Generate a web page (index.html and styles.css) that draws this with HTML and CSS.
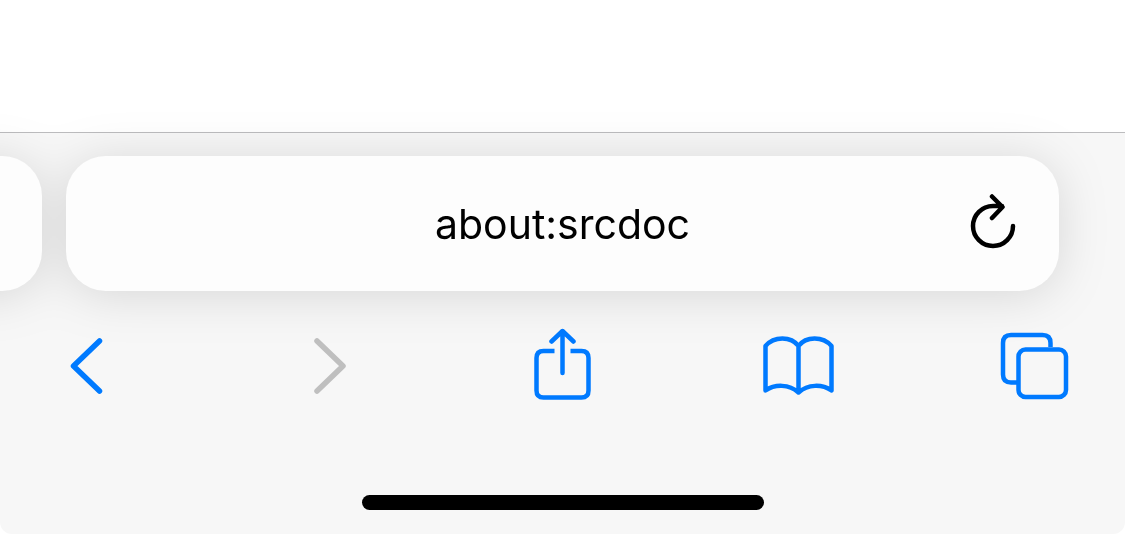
FILE: index.html
```html
<!DOCTYPE html>
<html lang="en">
<head>
	<meta charset="utf-8">
	<meta name="viewport" content="width=device-width, initial-scale=1">
	<title>about:srcdoc</title>
	<link rel="stylesheet" href="styles.css">
</head>
<body>
	<main class="page"></main>

	<footer class="browser-bar">
		<div class="tabs">
			<div class="tab previous-tab"></div>
			<form class="tab address-bar">
				<input class="address" type="text" value="about:srcdoc" aria-label="Address" readonly>
				<button class="reload" type="button" aria-label="Reload">
					<svg width="60" height="60" viewBox="0 0 60 60">
						<path d="M50 32A20 20 0 1 1 30 12H39M29 2.500L39.500 13L29 24"/>
					</svg>
				</button>
			</form>
		</div>

		<nav class="toolbar">
			<button class="tool" type="button" aria-label="Back">
				<svg class="chevron" width="72" height="72" viewBox="0 0 72 72">
					<path d="M45.500 13L19.500 38L45.500 63"/>
				</svg>
			</button>
			<button class="tool" type="button" aria-label="Forward" disabled>
				<svg class="chevron" width="72" height="72" viewBox="0 0 72 72">
					<path d="M27 13L53 38L27 63"/>
				</svg>
			</button>
			<button class="tool" type="button" aria-label="Share">
				<svg width="72" height="72" viewBox="0 0 72 72">
					<path class="flat" d="M27.500 23H16.500Q9.500 23 9.500 30V62.500Q9.500 69.500 16.500 69.500H54.500Q61.500 69.500 61.500 62.500V30Q61.500 23 54.500 23H43.500"/>
					<path d="M35.500 45V3M24.500 13.500L35.500 3L46.500 13.500"/>
				</svg>
			</button>
			<button class="tool" type="button" aria-label="Bookmarks">
				<svg width="72" height="72" viewBox="0 0 72 72">
					<path d="M35.500 18C28 8 11 8 2.500 18V62.500C12 56 26 56 35.500 64.500C45 56 59 56 68.500 62.500V18C60 8 43 8 35.500 18ZM35.500 18V64"/>
				</svg>
			</button>
			<button class="tool" type="button" aria-label="Tabs">
				<svg width="72" height="72" viewBox="0 0 72 72">
					<path class="flat" d="M18 54.500H12Q4 54.500 4 46.500V15Q4 7 12 7H43.500Q51.500 7 51.500 15V19"/>
					<rect x="19.500" y="21.500" width="47.500" height="47.500" rx="7"/>
				</svg>
			</button>
		</nav>

		<div class="home-indicator"></div>
	</footer>
</body>
</html>
```
FILE: styles.css
```css
* {
	box-sizing: border-box;
}

body {
	margin: 0;
	min-height: 100vh;
	display: flex;
	flex-direction: column;
	overflow-x: hidden;
	background: #fff;
	font-family: Inter, "Liberation Sans", sans-serif;
}

.page {
	flex: 1;
}

.browser-bar {
	padding: 23px 0 24px;
	background: #f7f7f7;
	border-top: 1px solid #bcbcbe;
	border-radius: 0 0 12px 12px;
}

/* tab cards, one shadow for the whole row */
.tabs {
	display: flex;
	gap: 24px;
	padding-right: 66px;
	filter: drop-shadow(0 4px 24px rgba(0, 0, 0, 0.13));
}

.tab {
	height: 135px;
	background: #fdfdfd;
	border-radius: 40px;
}

.previous-tab {
	flex: none;
	width: 242px;
	margin-left: -200px;
}

.address-bar {
	flex: 1;
	display: grid;
	grid-template-columns: 132px 1fr 132px;
	align-items: center;
}

.address {
	grid-column: 2;
	min-width: 0;
	width: 100%;
	padding: 0;
	border: 0;
	outline: none;
	background: none;
	color: #000;
	font-family: inherit;
	font-size: 41px;
	line-height: 56px;
	text-align: center;
}

.reload,
.tool {
	padding: 0;
	border: 0;
	background: none;
	cursor: pointer;
}

.reload {
	justify-self: center;
	color: #000;
}

svg {
	display: block;
	fill: none;
	stroke: currentColor;
	stroke-width: 4.5;
	stroke-linecap: round;
	stroke-linejoin: round;
}

.chevron {
	stroke-width: 5.5;
}

.flat {
	stroke-linecap: butt;
}

.toolbar {
	display: flex;
	justify-content: space-between;
	margin-top: 37px;
	padding: 0 54px;
}

.tool {
	color: #007aff;
}

.tool:disabled {
	color: #bfbfbf;
	cursor: default;
}

.home-indicator {
	width: 36%;
	max-width: 402px;
	height: 15px;
	margin: 95px auto 0;
	background: #000;
	border-radius: 8px;
}
```
